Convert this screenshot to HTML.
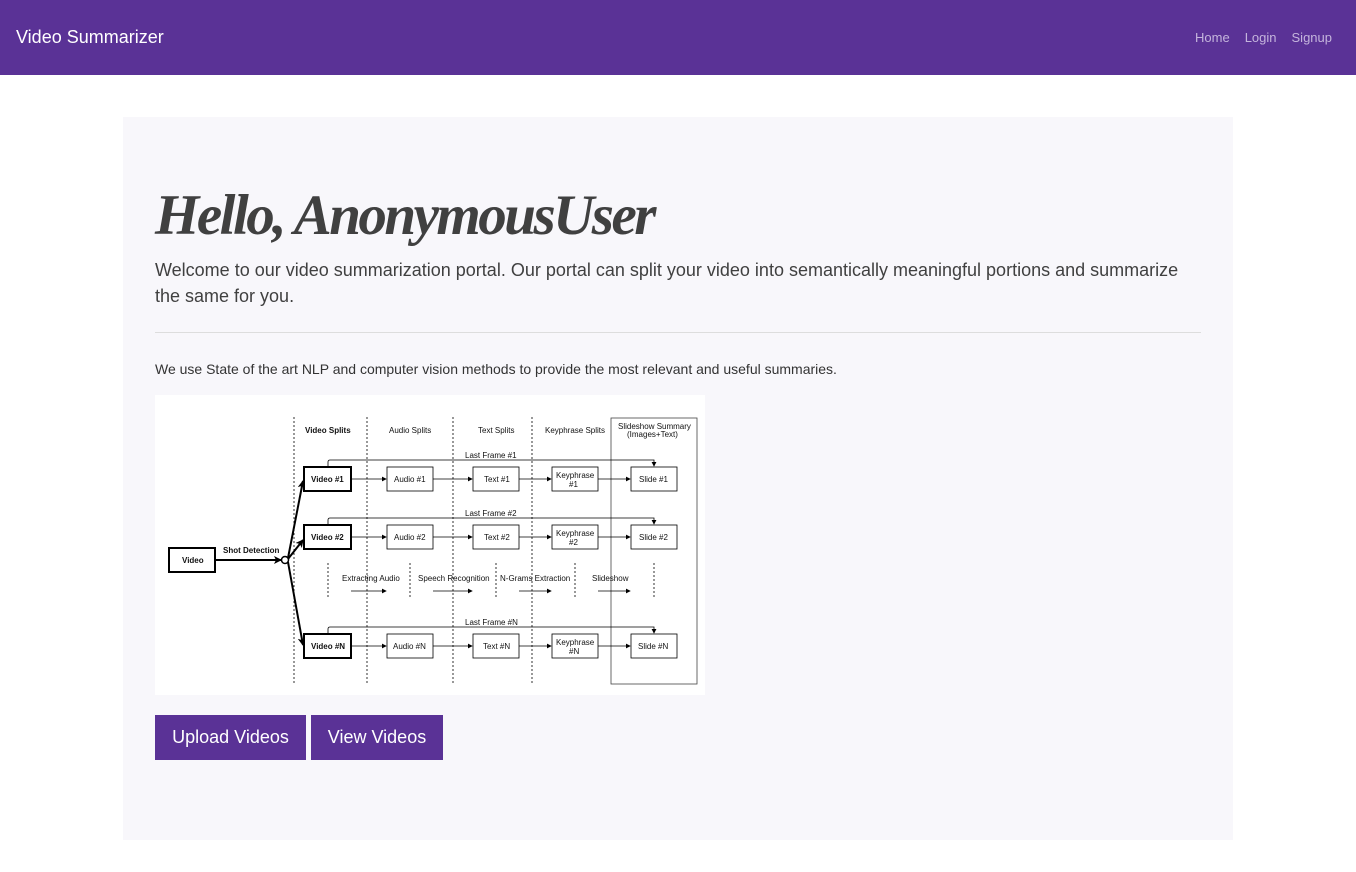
<!DOCTYPE html>
<html><head><meta charset="utf-8"><style>
*{margin:0;padding:0;box-sizing:border-box}
body{width:1356px;height:872px;background:#fff;font-family:"Liberation Sans",sans-serif;color:#333;position:relative;overflow:hidden}
.nav{position:absolute;left:0;top:0;width:1356px;height:75px;background:#5a3296}
.brand{position:absolute;left:16px;top:27px;font-size:18px;color:#fff}
.links{position:absolute;right:24px;top:30px;font-size:13px;color:#c4b4dc}
.links span{margin-left:15px}
.jumbo{position:absolute;left:123px;top:117px;width:1110px;height:723px;background:#f8f7fb}
h1{position:absolute;left:155px;top:183px;font-family:"Liberation Serif",serif;font-style:italic;font-weight:bold;font-size:57px;color:#404040;letter-spacing:-2.5px}
.lead{position:absolute;left:155px;top:257px;width:1050px;font-size:18px;line-height:26px;color:#404040}
hr{position:absolute;left:155px;top:332px;width:1046px;border:0;border-top:1px solid #ddd}
.p{position:absolute;left:155px;top:361px;font-size:14px;color:#333}
.img{position:absolute;left:155px;top:395px;width:550px;height:300px;background:#fff}
.btn{position:absolute;top:715px;height:45px;background:#5a3296;color:#fff;font-size:18px;line-height:45px;text-align:center}
svg text{font-family:"Liberation Sans",sans-serif;font-size:8px;fill:#111}
</style></head><body>
<div class="nav"><div class="brand">Video Summarizer</div><div class="links"><span>Home</span><span>Login</span><span>Signup</span></div></div>
<div class="jumbo"></div>
<h1>Hello, AnonymousUser</h1>
<div class="lead">Welcome to our video summarization portal. Our portal can split your video into semantically meaningful portions and summarize the same for you.</div>
<hr>
<div class="p">We use State of the art NLP and computer vision methods to provide the most relevant and useful summaries.</div>
<div class="img">
<svg width="550" height="300" viewBox="0 0 550 300">
<defs><marker id="a" markerWidth="6" markerHeight="6" refX="5" refY="3" orient="auto"><path d="M0,0 L6,3 L0,6z" fill="#000"/></marker>
<marker id="b" markerUnits="userSpaceOnUse" markerWidth="8" markerHeight="8" refX="7" refY="4" orient="auto"><path d="M0,0 L8,4 L0,8 L2,4z" fill="#000"/></marker></defs>
<g stroke="#000" stroke-dasharray="2,2" stroke-width="0.8">
<line x1="139" y1="22" x2="139" y2="290"/><line x1="212" y1="22" x2="212" y2="290"/><line x1="298" y1="22" x2="298" y2="290"/><line x1="377" y1="22" x2="377" y2="290"/>
<line x1="173" y1="168" x2="173" y2="203"/><line x1="255" y1="168" x2="255" y2="203"/><line x1="341" y1="168" x2="341" y2="203"/><line x1="420" y1="168" x2="420" y2="203"/><line x1="499" y1="168" x2="499" y2="203"/>
</g>
<rect x="456" y="23" width="86" height="266" fill="none" stroke="#444" stroke-width="0.8"/>
<text x="150" y="38" font-weight="bold">Video Splits</text>
<text x="234" y="38">Audio Splits</text><text x="323" y="38">Text Splits</text><text x="390" y="38">Keyphrase Splits</text>
<text x="463" y="34">Slideshow Summary</text><text x="472" y="42">(Images+Text)</text>
<rect x="14" y="153" width="46" height="24" fill="#fff" stroke="#000" stroke-width="2"/><text x="27" y="168" font-weight="bold">Video</text>
<text x="68" y="158" font-weight="bold">Shot Detection</text>
<line x1="60" y1="165" x2="126" y2="165" stroke="#000" stroke-width="2" marker-end="url(#b)"/>
<circle cx="130" cy="165" r="3.5" fill="#fff" stroke="#000" stroke-width="1.5"/>
<g stroke="#000" stroke-width="2"><line x1="133" y1="163" x2="148" y2="86" marker-end="url(#b)"/><line x1="133" y1="164" x2="148" y2="145" marker-end="url(#b)"/><line x1="133" y1="167" x2="148" y2="250" marker-end="url(#b)"/></g>
<g id="r1">
<text x="310" y="63">Last Frame #1</text>
<path d="M173,72 V67 Q173,65 175,65 H499 V71" fill="none" stroke="#000" stroke-width="0.8" marker-end="url(#a)"/>
<rect x="149" y="72" width="47" height="24" fill="#fff" stroke="#000" stroke-width="2"/><text x="156" y="87" font-weight="bold">Video #1</text>
<rect x="232" y="72" width="46" height="24" fill="#fff" stroke="#000" stroke-width="0.8"/><text x="239" y="87">Audio #1</text>
<rect x="318" y="72" width="46" height="24" fill="#fff" stroke="#000" stroke-width="0.8"/><text x="329" y="87">Text #1</text>
<rect x="397" y="72" width="46" height="24" fill="#fff" stroke="#000" stroke-width="0.8"/><text x="401" y="83">Keyphrase</text><text x="414" y="92">#1</text>
<rect x="476" y="72" width="46" height="24" fill="#fff" stroke="#000" stroke-width="0.8"/><text x="484" y="87">Slide #1</text>
<g stroke="#000" stroke-width="0.8"><line x1="196" y1="84" x2="231" y2="84" marker-end="url(#a)"/><line x1="278" y1="84" x2="317" y2="84" marker-end="url(#a)"/><line x1="364" y1="84" x2="396" y2="84" marker-end="url(#a)"/><line x1="443" y1="84" x2="475" y2="84" marker-end="url(#a)"/></g>
</g>
<g transform="translate(0,58)">
<text x="310" y="63">Last Frame #2</text>
<path d="M173,72 V67 Q173,65 175,65 H499 V71" fill="none" stroke="#000" stroke-width="0.8" marker-end="url(#a)"/>
<rect x="149" y="72" width="47" height="24" fill="#fff" stroke="#000" stroke-width="2"/><text x="156" y="87" font-weight="bold">Video #2</text>
<rect x="232" y="72" width="46" height="24" fill="#fff" stroke="#000" stroke-width="0.8"/><text x="239" y="87">Audio #2</text>
<rect x="318" y="72" width="46" height="24" fill="#fff" stroke="#000" stroke-width="0.8"/><text x="329" y="87">Text #2</text>
<rect x="397" y="72" width="46" height="24" fill="#fff" stroke="#000" stroke-width="0.8"/><text x="401" y="83">Keyphrase</text><text x="414" y="92">#2</text>
<rect x="476" y="72" width="46" height="24" fill="#fff" stroke="#000" stroke-width="0.8"/><text x="484" y="87">Slide #2</text>
<g stroke="#000" stroke-width="0.8"><line x1="196" y1="84" x2="231" y2="84" marker-end="url(#a)"/><line x1="278" y1="84" x2="317" y2="84" marker-end="url(#a)"/><line x1="364" y1="84" x2="396" y2="84" marker-end="url(#a)"/><line x1="443" y1="84" x2="475" y2="84" marker-end="url(#a)"/></g>
</g>
<g transform="translate(0,167)">
<text x="310" y="63">Last Frame #N</text>
<path d="M173,72 V67 Q173,65 175,65 H499 V71" fill="none" stroke="#000" stroke-width="0.8" marker-end="url(#a)"/>
<rect x="149" y="72" width="47" height="24" fill="#fff" stroke="#000" stroke-width="2"/><text x="156" y="87" font-weight="bold">Video #N</text>
<rect x="232" y="72" width="46" height="24" fill="#fff" stroke="#000" stroke-width="0.8"/><text x="238" y="87">Audio #N</text>
<rect x="318" y="72" width="46" height="24" fill="#fff" stroke="#000" stroke-width="0.8"/><text x="328" y="87">Text #N</text>
<rect x="397" y="72" width="46" height="24" fill="#fff" stroke="#000" stroke-width="0.8"/><text x="401" y="83">Keyphrase</text><text x="414" y="92">#N</text>
<rect x="476" y="72" width="46" height="24" fill="#fff" stroke="#000" stroke-width="0.8"/><text x="483" y="87">Slide #N</text>
<g stroke="#000" stroke-width="0.8"><line x1="196" y1="84" x2="231" y2="84" marker-end="url(#a)"/><line x1="278" y1="84" x2="317" y2="84" marker-end="url(#a)"/><line x1="364" y1="84" x2="396" y2="84" marker-end="url(#a)"/><line x1="443" y1="84" x2="475" y2="84" marker-end="url(#a)"/></g>
</g>
<text x="187" y="186">Extracting Audio</text><text x="263" y="186">Speech Recognition</text><text x="345" y="186">N-Grams Extraction</text><text x="437" y="186">Slideshow</text>
<g stroke="#000" stroke-width="0.8"><line x1="196" y1="196" x2="231" y2="196" marker-end="url(#a)"/><line x1="278" y1="196" x2="317" y2="196" marker-end="url(#a)"/><line x1="364" y1="196" x2="396" y2="196" marker-end="url(#a)"/><line x1="443" y1="196" x2="475" y2="196" marker-end="url(#a)"/></g>
</svg>
</div>
<div class="btn" style="left:155px;width:151px">Upload Videos</div>
<div class="btn" style="left:311px;width:132px">View Videos</div>
</body></html>
